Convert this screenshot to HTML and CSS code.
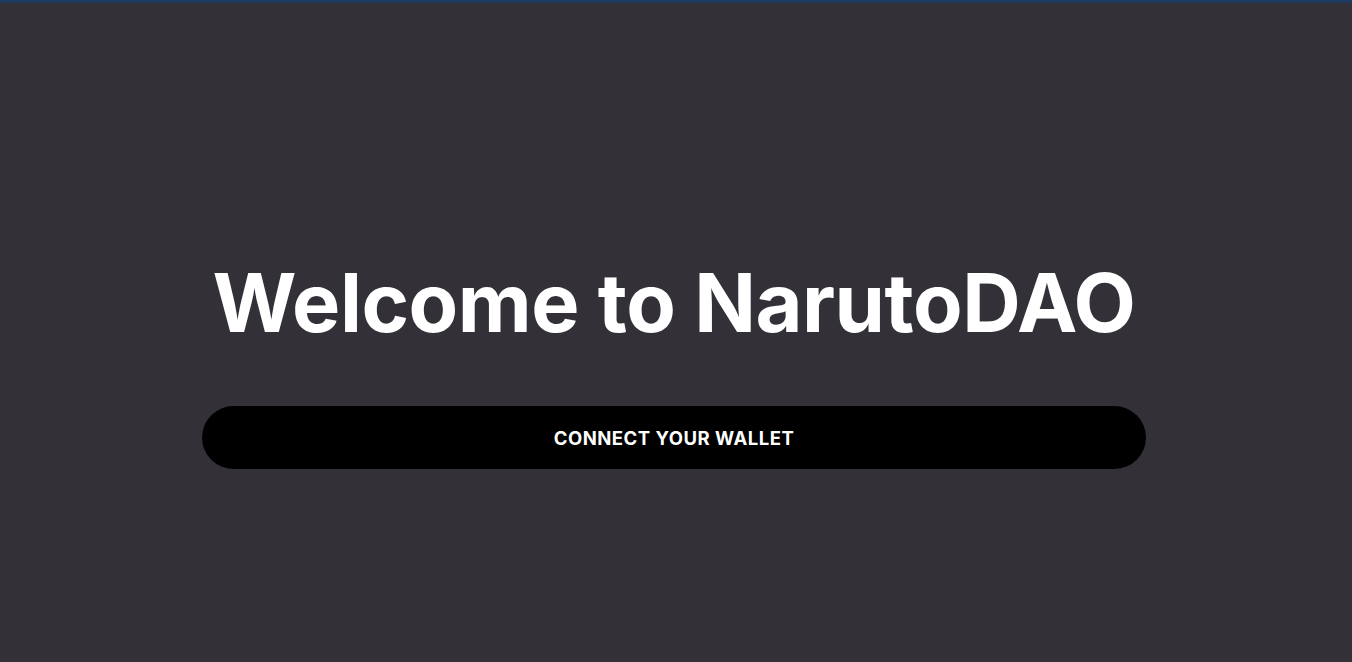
FILE: index.html
```html
<!DOCTYPE html>
<html lang="en">
<head>
<meta charset="utf-8">
<title>NarutoDAO</title>
<link rel="stylesheet" href="styles.css">
</head>
<body>
<div class="topline"></div>
<main class="hero">
  <h1 class="title">Welcome to NarutoDAO</h1>
  <button class="connect">CONNECT YOUR WALLET</button>
</main>
</body>
</html>
```
FILE: styles.css
```css
html, body {
  margin: 0;
  padding: 0;
  height: 100%;
}
body {
  background: #333038;
  font-family: Inter, "Noto Sans", sans-serif;
  color: #fff;
  display: flex;
  flex-direction: column;
}
.topline {
  height: 3px;
  background: #1f3a5f;
  flex: none;
}
.hero {
  flex: 1;
  display: flex;
  flex-direction: column;
  align-items: center;
  padding-top: 260px;
  padding-right: 4px;
}
.title {
  margin: 0;
  font-size: 81px;
  font-weight: 700;
  line-height: 1;
  letter-spacing: -0.45px;
}
.connect {
  margin-top: 62px;
  width: 944px;
  height: 63px;
  border: none;
  border-radius: 32px;
  background: #000;
  color: #fff;
  font-family: Inter, "Noto Sans", sans-serif;
  font-weight: 700;
  font-size: 18.5px;
  letter-spacing: 0.5px;
  cursor: pointer;
}
```
